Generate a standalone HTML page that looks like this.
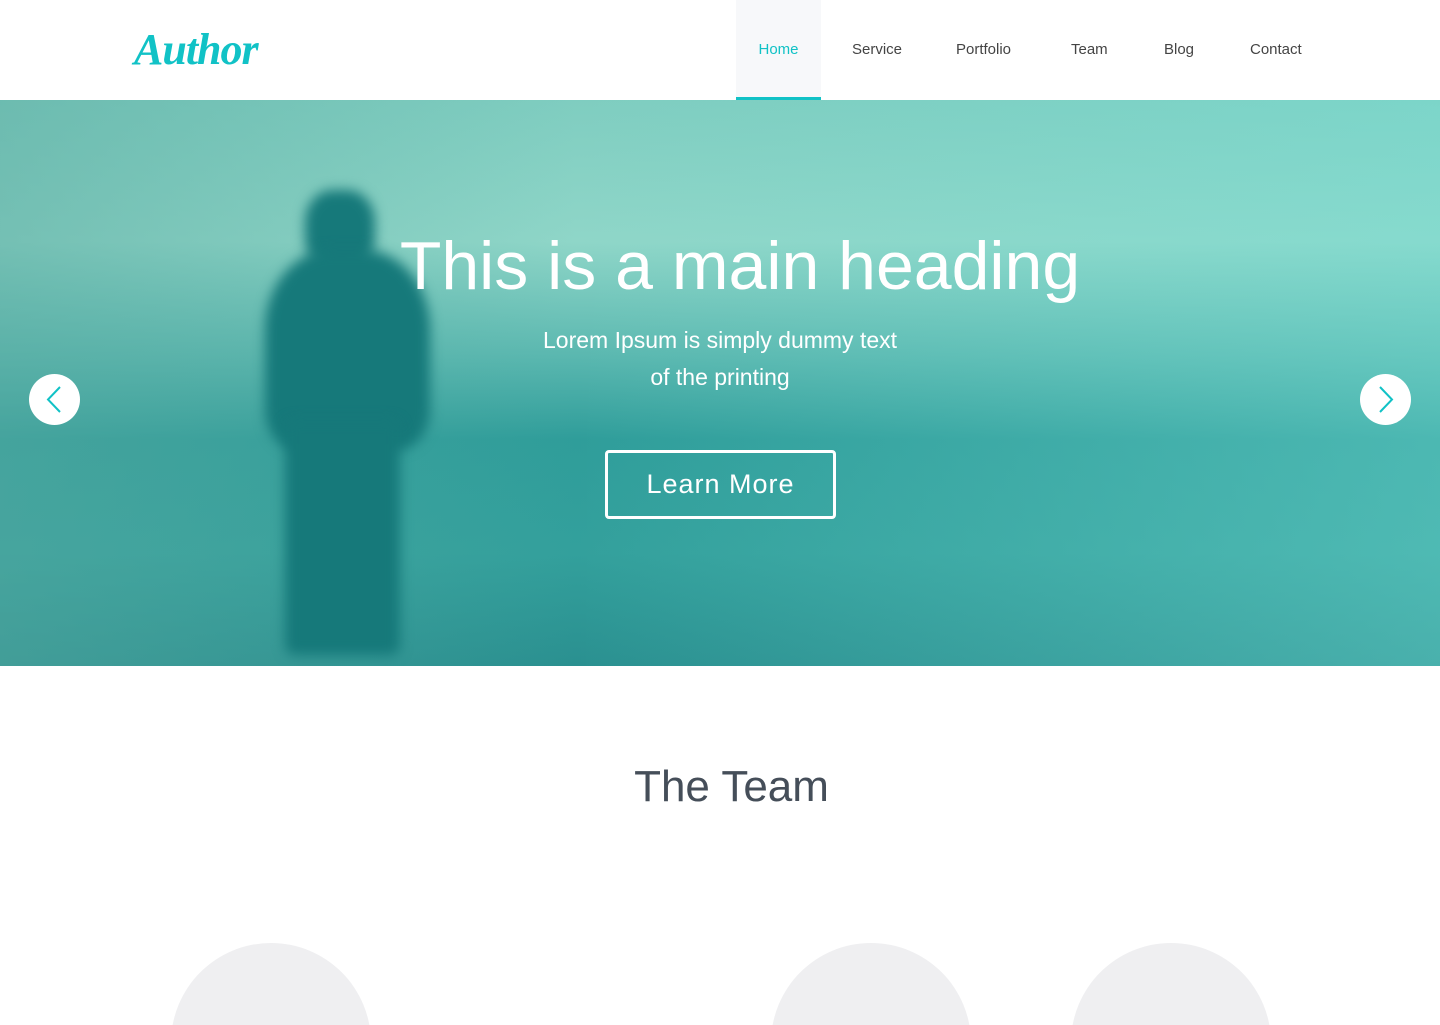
<!DOCTYPE html>
<html><head><meta charset="utf-8"><style>
*{margin:0;padding:0;box-sizing:border-box}
html,body{width:1440px;height:1025px;overflow:hidden}
body{background:#fff;font-family:"Liberation Sans",sans-serif;position:relative}
.hdr{height:100px;position:relative;background:#fff}
.logo{position:absolute;left:134px;top:24px;font-family:"Liberation Serif",serif;font-style:italic;font-weight:bold;font-size:44px;color:#11c2c6;letter-spacing:-1px}
.nav a{position:absolute;top:0;height:100px;line-height:99px;font-size:15px;color:#444;text-decoration:none}
.nav .act{background:#f7f8fa;color:#11c2c6;border-bottom:3px solid #11c2c6;width:85px;left:736px;text-align:center;line-height:99px}
.hero{position:relative;height:566px;overflow:hidden;background:linear-gradient(180deg,#7fcdc0 0%,#8fd6c8 25%,#5bb8b0 45%,#2f9d9a 60%,#33a09c 80%,#2a9090 100%)}
.hero .sky{position:absolute;inset:0;background:linear-gradient(90deg,rgba(90,170,160,.5),rgba(0,0,0,0) 40%,rgba(120,225,215,.4))}
.fig{position:absolute;filter:blur(6px);background:#16797a}
h1{position:absolute;top:127px;left:0;width:1480px;text-align:center;color:#fff;font-size:68px;font-weight:normal}
.sub{position:absolute;top:222px;width:1440px;text-align:center;color:#fff;font-size:23px;line-height:37px}
.btn{position:absolute;left:605px;top:350px;width:231px;height:69px;border:3px solid #fff;border-radius:4px;color:#fff;font-size:27px;text-align:center;line-height:63px;letter-spacing:1px}
.arr{position:absolute;top:274px;width:51px;height:51px;border-radius:50%;background:#fff}
.team{position:absolute;top:762px;width:1463px;text-align:center;font-size:44px;color:#454e59}
.cw{position:absolute;top:943px;left:0;width:1440px;height:82px;overflow:hidden}
.c{position:absolute;top:0;width:200px;height:200px;border-radius:50%;background:#efeff1}
</style></head><body>
<div class="hdr"><div class="logo">Author</div>
<div class="nav"><a class="act">Home</a><a style="left:852px">Service</a><a style="left:956px">Portfolio</a><a style="left:1071px">Team</a><a style="left:1164px">Blog</a><a style="left:1250px">Contact</a></div></div>
<div class="hero"><div class="sky"></div>
<div class="fig" style="left:305px;top:90px;width:70px;height:80px;border-radius:40%"></div>
<div class="fig" style="left:265px;top:150px;width:165px;height:200px;border-radius:40% 40% 20% 20%"></div>
<div class="fig" style="left:285px;top:320px;width:115px;height:235px;border-radius:10px"></div>
<h1>This is a main heading</h1>
<div class="sub">Lorem Ipsum is simply dummy text<br>of the printing</div>
<div class="btn">Learn More</div>
<div class="arr" style="left:29px"><svg width="51" height="51"><path d="M31 13 L19 25.5 L31 38" stroke="#11c2c6" stroke-width="2" fill="none"/></svg></div>
<div class="arr" style="left:1360px"><svg width="51" height="51"><path d="M20 13 L32 25.5 L20 38" stroke="#11c2c6" stroke-width="2" fill="none"/></svg></div>
</div>
<div class="team">The Team</div>
<div class="cw"><div class="c" style="left:171px"></div><div class="c" style="left:771px"></div><div class="c" style="left:1071px"></div></div>
</body></html>
